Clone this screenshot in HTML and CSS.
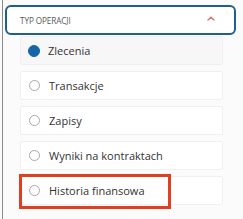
FILE: index.html
```html
<!DOCTYPE html>
<html>
<head>
<meta charset="utf-8">
<link rel="stylesheet" href="styles.css">
</head>
<body>
<div class="panel">
  <div class="header">
    <span class="title">TYP OPERACJI</span>
    <svg class="chev" width="8" height="5" viewBox="0 0 8 5"><path d="M1 4 L4 1.2 L7 4" fill="none" stroke="#d07a70" stroke-width="1.4" stroke-linecap="round"/></svg>
  </div>
  <ul class="list">
    <li class="item selected"><span class="radio on"></span>Zlecenia</li>
    <li class="item"><span class="radio"></span>Transakcje</li>
    <li class="item"><span class="radio"></span>Zapisy</li>
    <li class="item"><span class="radio"></span>Wyniki na kontraktach</li>
    <li class="item hl"><span class="radio"></span>Historia finansowa<span class="mark"></span></li>
  </ul>
</div>
</body>
</html>
```
FILE: styles.css
```css
html, body { margin: 0; padding: 0; }
body {
  background: #fbfbfb;
  font-family: "Open Sans", "Liberation Sans", sans-serif;
  width: 243px;
  height: 219px;
  overflow: hidden;
}
.panel {
  margin-left: 2px;
  border-left: 1px solid #8a8a8a;
  height: 219px;
  padding: 5px 0 0 2px;
  box-sizing: border-box;
  width: 234px;
}
.header {
  height: 30px;
  box-sizing: border-box;
  border: 2px solid #1d5f8f;
  border-radius: 6px;
  background: #fff;
  display: flex;
  align-items: center;
  justify-content: space-between;
  padding: 0 19px 0 13px;
}
.title {
  font-size: 8.2px;
  color: #595959;
  letter-spacing: -0.1px;
}
.chev { display: block; margin-top: -3px; }
.list {
  list-style: none;
  margin: 1px 0 0 15px;
  padding: 0;
  width: 203px;
  display: flex;
  flex-direction: column;
  gap: 6px;
}
.item {
  position: relative;
  height: 29px;
  box-sizing: border-box;
  background: #fff;
  border: 1px solid #f0f0f0;
  border-radius: 2px;
  display: flex;
  align-items: center;
  padding-left: 8px;
  font-size: 11px;
  color: #333;
}
.item.selected { background: #f7f7f7; }
.radio {
  width: 11px;
  height: 11px;
  box-sizing: border-box;
  border: 1px solid #a8a8a8;
  border-radius: 50%;
  margin-right: 9px;
  flex: none;
}
.radio.on {
  width: 12px;
  height: 12px;
  margin-left: -1px;
  margin-right: 8px;
  background: #1565a8;
  border-color: #1565a8;
}
.mark {
  position: absolute;
  left: -2px;
  top: -3px;
  width: 152px;
  height: 35px;
  box-sizing: border-box;
  border: 3px solid #e0401f;
}
```
